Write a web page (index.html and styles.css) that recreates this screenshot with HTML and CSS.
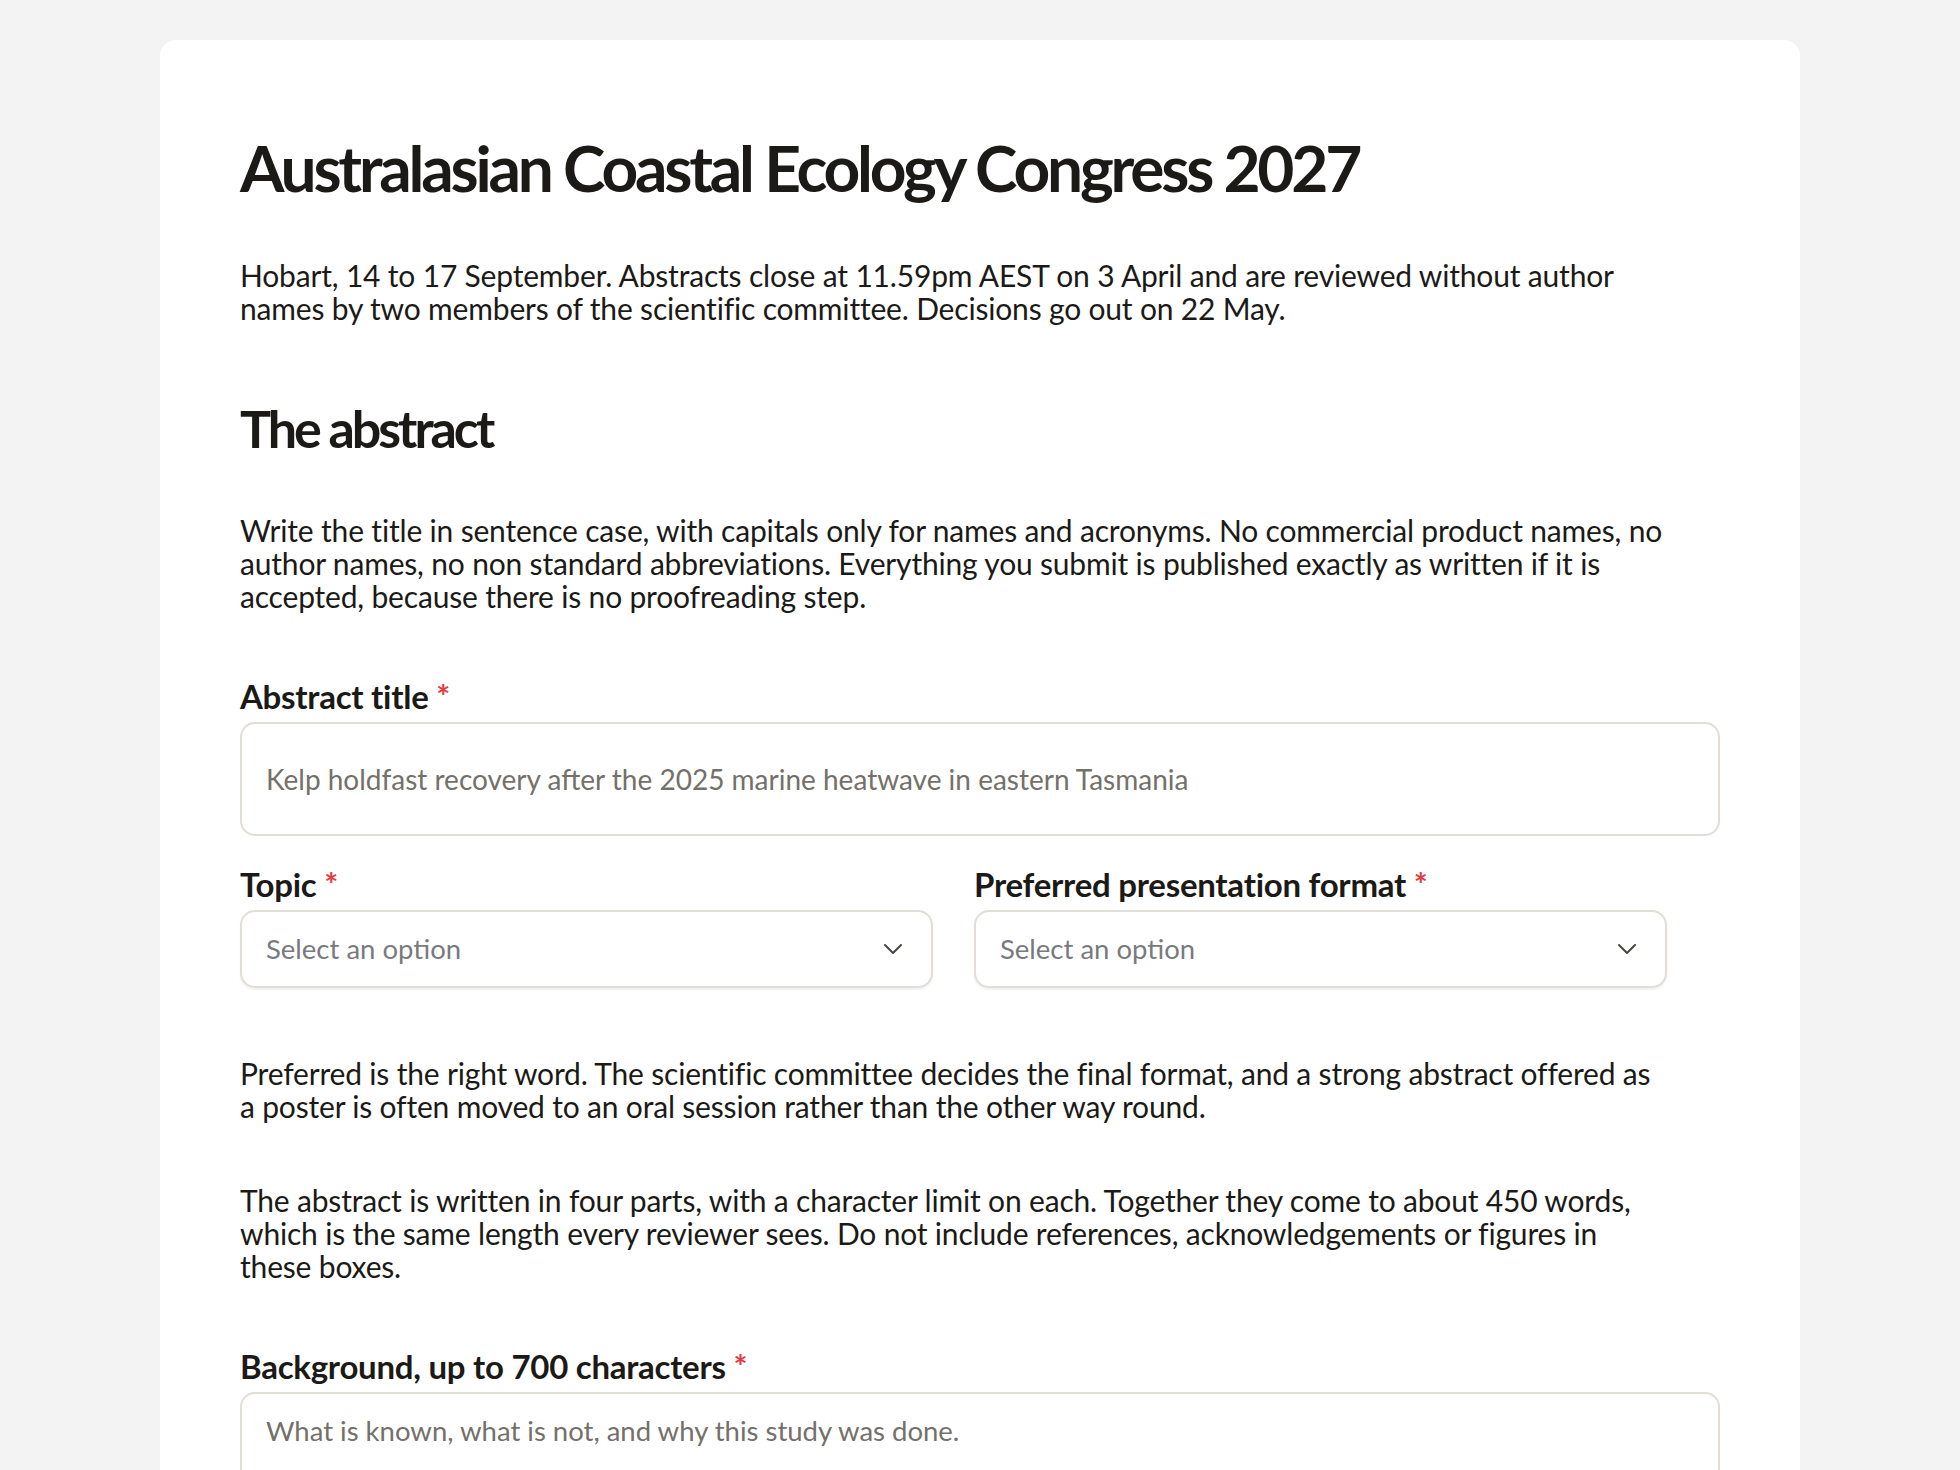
FILE: index.html
```html
<!DOCTYPE html>
<html lang="en-AU">
<head>
    <meta charset="UTF-8">
    <meta name="viewport" content="width=device-width, initial-scale=1.0">
    <title>Abstract submission</title>
    <link rel="stylesheet" href="styles.css">
</head>
<body>
    <div class="page">
        <form class="card">
            <h1>Australasian Coastal Ecology Congress 2027</h1>
            <p class="intro">Hobart, 14 to 17 September. Abstracts close at 11.59pm AEST on 3 April and are reviewed without author names by two members of the scientific committee. Decisions go out on 22 May.</p>

            <h2>The abstract</h2>
            <p class="note">Write the title in sentence case, with capitals only for names and acronyms. No commercial product names, no author names, no non standard abbreviations. Everything you submit is published exactly as written if it is accepted, because there is no proofreading step.</p>

            <div class="field">
                <label for="title">Abstract title <span class="req">*</span></label>
                <input id="title" class="text-input" type="text" placeholder="Kelp holdfast recovery after the 2025 marine heatwave in eastern Tasmania">
            </div>

            <div class="field-row">
                <div class="field">
                    <label for="topic">Topic <span class="req">*</span></label>
                    <div class="select-wrap">
                        <select id="topic" class="select">
                            <option value="">Select an option</option>
                        </select>
                        <svg class="chevron" viewBox="0 0 20 12" width="20" height="12"><path d="M2 2l8 8 8-8" fill="none" stroke="currentColor" stroke-width="2" stroke-linecap="round" stroke-linejoin="round"/></svg>
                    </div>
                </div>
                <div class="field">
                    <label for="format">Preferred presentation format <span class="req">*</span></label>
                    <div class="select-wrap">
                        <select id="format" class="select">
                            <option value="">Select an option</option>
                        </select>
                        <svg class="chevron" viewBox="0 0 20 12" width="20" height="12"><path d="M2 2l8 8 8-8" fill="none" stroke="currentColor" stroke-width="2" stroke-linecap="round" stroke-linejoin="round"/></svg>
                    </div>
                </div>
            </div>

            <p class="note after-row">Preferred is the right word. The scientific committee decides the final format, and a strong abstract offered as a poster is often moved to an oral session rather than the other way round.</p>
            <p class="note">The abstract is written in four parts, with a character limit on each. Together they come to about 450 words, which is the same length every reviewer sees. Do not include references, acknowledgements or figures in these boxes.</p>

            <div class="field">
                <label for="background">Background, up to 700 characters <span class="req">*</span></label>
                <textarea id="background" class="text-area" rows="6" placeholder="What is known, what is not, and why this study was done."></textarea>
            </div>
        </form>
    </div>
</body>
</html>
```

FILE: styles.css
```css
body {
    margin: 0;
    background-color: #f3f3f3;
    color: #1c1a17;
    font-family: Lato, "Noto Sans", sans-serif;
}

.page {
    padding: 40px 160px;
}

.card {
    background-color: #fff;
    border-radius: 16px;
    padding: 93px 80px 80px;
}

h1 {
    font-size: 64px;
    line-height: 1.1;
    font-weight: 700;
    letter-spacing: -0.05em;
    margin: 0 0 56px;
}

h2 {
    font-size: 52px;
    line-height: 1.1;
    font-weight: 700;
    letter-spacing: -0.058em;
    margin: 75px 0 56px;
}

.intro,
.note {
    font-size: 30px;
    line-height: 33px;
    letter-spacing: -0.006em;
    max-width: 1426px;
    margin: 0;
}

.note + .note {
    margin-top: 61px;
}

.note.after-row {
    margin-top: 69px;
}

.field {
    display: flex;
    flex-direction: column;
    gap: 6px;
    margin-top: 63px;
}

.field-row {
    display: grid;
    grid-template-columns: 693px 693px;
    gap: 41px;
    margin-top: 28px;
}

.field-row .field {
    margin-top: 0;
}

.field label {
    font-size: 33px;
    line-height: 40px;
    font-weight: 700;
    letter-spacing: -0.008em;
}

.req {
    color: #e5393f;
}

.text-input,
.text-area,
.select {
    font-family: inherit;
    font-size: 28px;
    color: #1c1a17;
    background-color: #fff;
    border: 2px solid #e2ddd7;
    border-radius: 15px;
    box-sizing: border-box;
    width: 100%;
}

.text-input {
    height: 114px;
    padding: 0 24px;
}

.text-area {
    font-size: 27.5px;
    line-height: 1.2;
    padding: 20px 24px;
    resize: vertical;
}

.text-input::placeholder,
.text-area::placeholder {
    color: #74706a;
}

.select-wrap {
    position: relative;
}

.select {
    appearance: none;
    font-size: 27.5px;
    height: 78px;
    padding: 0 24px;
    color: #797a80;
    box-shadow: 0 2px 2px rgba(0, 0, 0, 0.06);
}

.chevron {
    position: absolute;
    right: 30px;
    top: 33px;
    color: #4a453d;
    pointer-events: none;
}
```
